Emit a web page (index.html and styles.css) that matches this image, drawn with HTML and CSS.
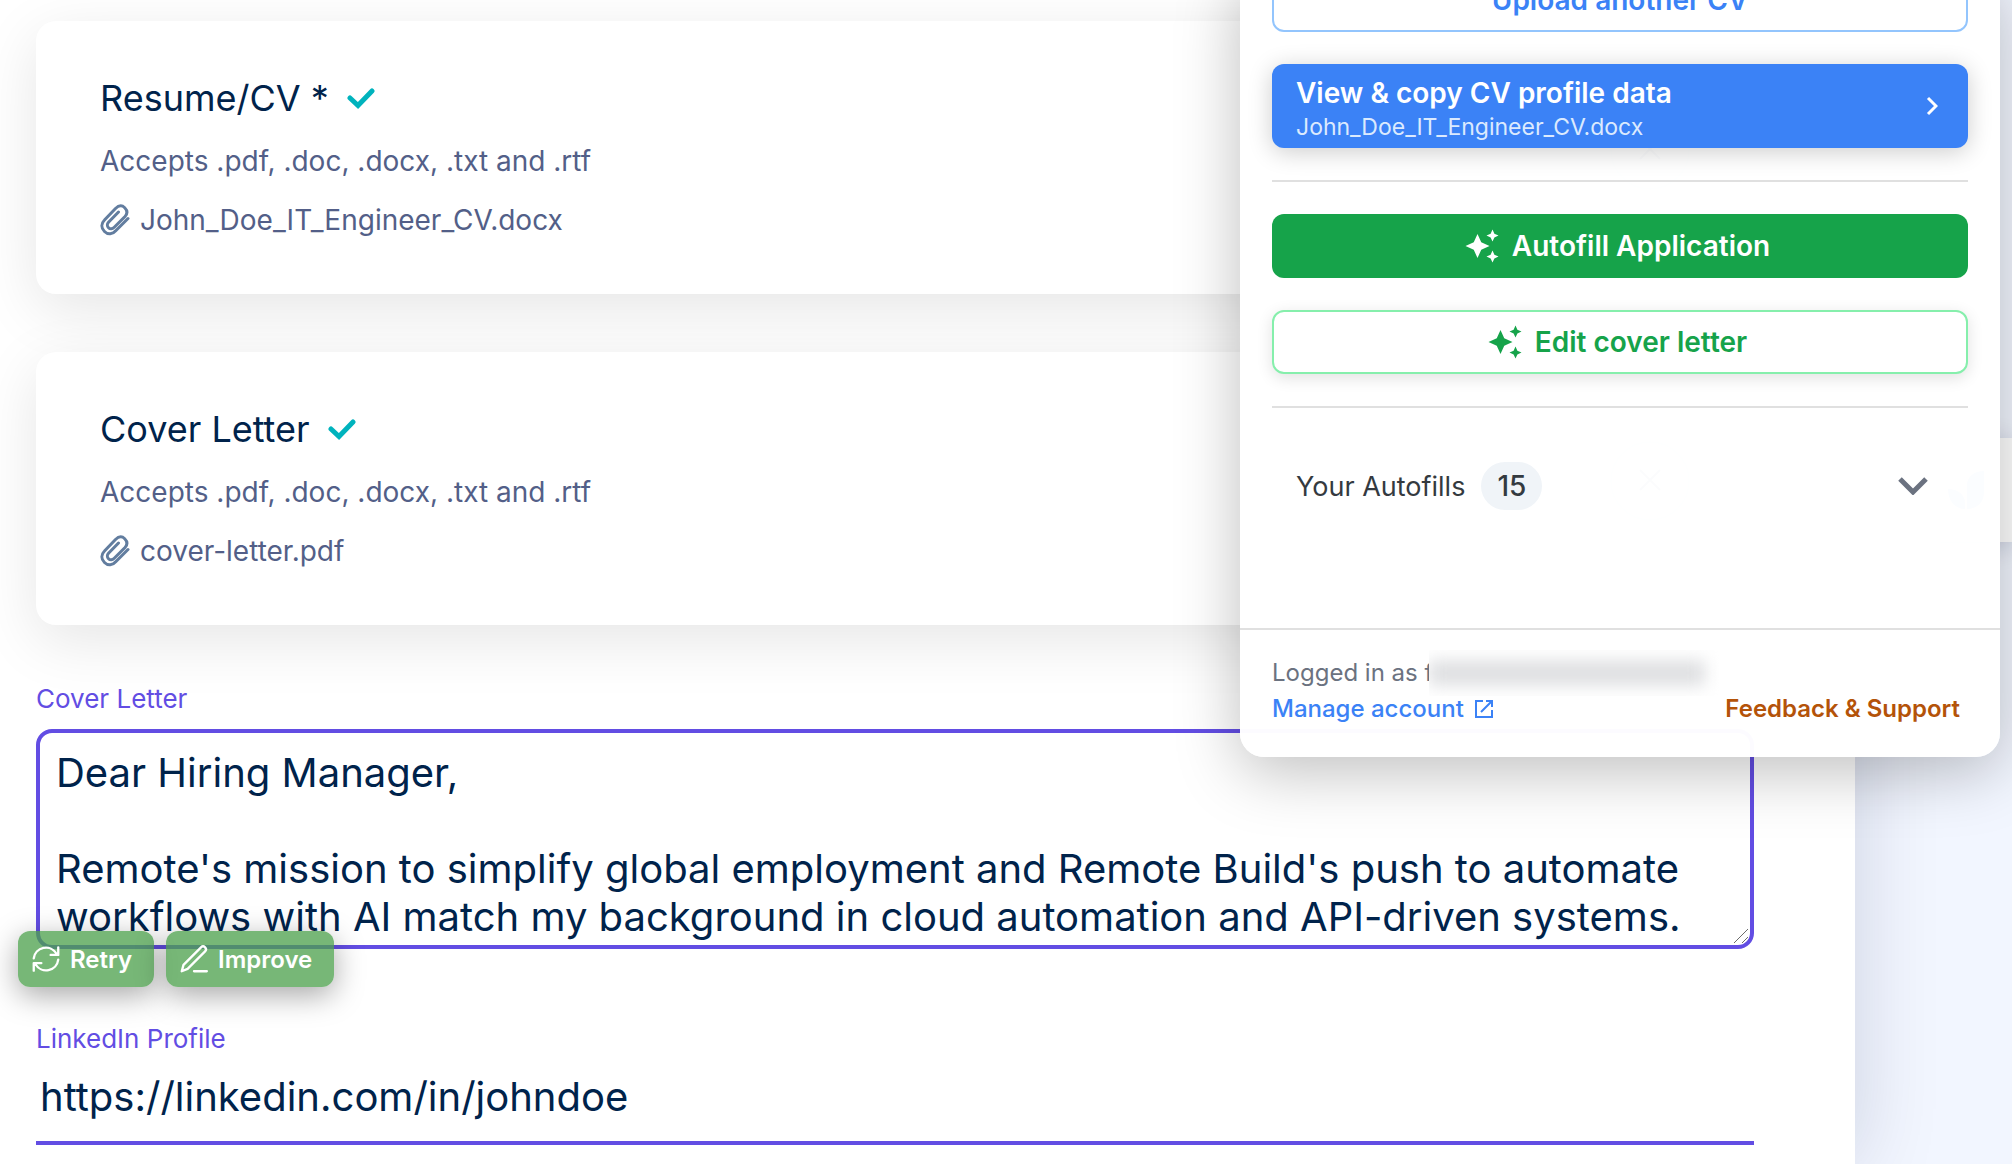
FILE: index.html
```html
<!DOCTYPE html>
<html lang="en">
<head>
    <meta charset="UTF-8">
    <meta name="viewport" content="width=device-width, initial-scale=1.0">
    <title>Job Application</title>
    <link rel="stylesheet" href="styles.css">
</head>
<body>
    <main class="page">
        <form class="application">
            <section class="card">
                <div>
                    <h2 class="card-title">Resume/CV *
                        <svg class="check" viewBox="0 0 28 24" aria-hidden="true"><path d="M3 12l8 7.500L25 5"/></svg>
                    </h2>
                    <p class="hint">Accepts .pdf, .doc, .docx, .txt and .rtf</p>
                    <p class="file">
                        <svg class="clip" viewBox="0 0 32 32" aria-hidden="true"><path d="M28 14.500L16 26.500C12.500 30.500 8 31 4.500 27.500C1 24 1 19.500 4.500 16L15.500 4.500C18.500 1.500 22 1 24.700 3.700C27.400 6.400 27.400 9.800 25 12.500L14 23.500C12.400 25.100 10 25.200 8.500 23.700C7 22.200 7 19.800 8.500 18.200L18.500 8"/></svg>
                        John_Doe_IT_Engineer_CV.docx
                    </p>
                </div>
                <button type="button" class="remove" aria-label="Remove Resume/CV">
                    <svg viewBox="0 0 24 24" aria-hidden="true"><path d="M2 2l20 20M22 2L2 22"/></svg>
                </button>
            </section>

            <section class="card">
                <div>
                    <h2 class="card-title">Cover Letter
                        <svg class="check" viewBox="0 0 28 24" aria-hidden="true"><path d="M3 12l8 7.500L25 5"/></svg>
                    </h2>
                    <p class="hint">Accepts .pdf, .doc, .docx, .txt and .rtf</p>
                    <p class="file">
                        <svg class="clip" viewBox="0 0 32 32" aria-hidden="true"><path d="M28 14.500L16 26.500C12.500 30.500 8 31 4.500 27.500C1 24 1 19.500 4.500 16L15.500 4.500C18.500 1.500 22 1 24.700 3.700C27.400 6.400 27.400 9.800 25 12.500L14 23.500C12.400 25.100 10 25.200 8.500 23.700C7 22.200 7 19.800 8.500 18.200L18.500 8"/></svg>
                        cover-letter.pdf
                    </p>
                </div>
                <button type="button" class="remove" aria-label="Remove Cover Letter">
                    <svg viewBox="0 0 24 24" aria-hidden="true"><path d="M2 2l20 20M22 2L2 22"/></svg>
                </button>
            </section>

            <div class="field letter-field">
                <label for="letter">Cover Letter</label>
                <textarea id="letter" name="letter">Dear Hiring Manager,

Remote's mission to simplify global employment and Remote Build's push to automate workflows with AI match my background in cloud automation and API-driven systems.</textarea>
                <svg class="grip" viewBox="0 0 16 16" aria-hidden="true"><path d="M1 15L15 1M9 15L15 9"/></svg>
                <div class="ai-actions">
                    <button type="button" class="ai-button">
                        <svg viewBox="0 0 24 24" aria-hidden="true"><path d="M22.500 2v6.500H16M1.500 22v-6.500H8M1.500 11.500A10.500 10.500 0 0 1 21 7.500M22.500 12.500A10.500 10.500 0 0 1 3 16.500"/></svg>
                        Retry
                    </button>
                    <button type="button" class="ai-button">
                        <svg viewBox="0 0 24 24" aria-hidden="true"><path d="M12 22.500h11M18 2a2.400 2.400 0 0 1 3.500 3.500L6.500 20.500l-5 2 1.500-5.500z"/></svg>
                        Improve
                    </button>
                </div>
            </div>

            <div class="field">
                <label for="linkedin">LinkedIn Profile</label>
                <input type="text" id="linkedin" name="linkedin" value="https://linkedin.com/in/johndoe">
            </div>
        </form>
    </main>

    <div class="side-tab">
        <svg viewBox="0 0 36 38" aria-hidden="true"><path d="M19 38V14C19 6 26 0 36 0v22c0 9-7 16-17 16zM17 38C7 38 0 30 0 18c10 0 17 6 17 14z"/></svg>
    </div>

    <aside class="popup">
        <div class="popup-body">
            <button type="button" class="btn btn-upload">Upload another CV</button>
            <button type="button" class="btn btn-profile">
                <span class="profile-text">
                    <span>View &amp; copy CV profile data</span>
                    <small>John_Doe_IT_Engineer_CV.docx</small>
                </span>
                <svg class="arrow" viewBox="0 0 12 20" aria-hidden="true"><path d="M2 2l8 8-8 8"/></svg>
            </button>
            <hr>
            <button type="button" class="btn btn-autofill">
                <svg class="sparkles" viewBox="0 0 24 24" aria-hidden="true"><path d="M19 9l1.250-2.750L23 5l-2.750-1.250L19 1l-1.250 2.750L15 5l2.750 1.250L19 9zm-7.500.500L9 4 6.500 9.500 1 12l5.500 2.500L9 20l2.500-5.500L17 12l-5.500-2.500zM19 15l-1.250 2.750L15 19l2.750 1.250L19 23l1.250-2.750L23 19l-2.750-1.250L19 15z"/></svg>
                Autofill Application
            </button>
            <button type="button" class="btn btn-edit">
                <svg class="sparkles" viewBox="0 0 24 24" aria-hidden="true"><path d="M19 9l1.250-2.750L23 5l-2.750-1.250L19 1l-1.250 2.750L15 5l2.750 1.250L19 9zm-7.500.500L9 4 6.500 9.500 1 12l5.500 2.500L9 20l2.500-5.500L17 12l-5.500-2.500zM19 15l-1.250 2.750L15 19l2.750 1.250L19 23l1.250-2.750L23 19l-2.750-1.250L19 15z"/></svg>
                Edit cover letter
            </button>
            <hr>
            <button type="button" class="autofills">
                Your Autofills <span class="count">15</span>
                <svg class="chevron" viewBox="0 0 30 18" aria-hidden="true"><path d="M2 2l13 13L28 2"/></svg>
            </button>
        </div>
        <footer class="popup-footer">
            <p class="account">Logged in as f<span class="redacted"></span></p>
            <div class="links">
                <a class="manage" href="#">Manage account
                    <svg viewBox="0 0 20 20" aria-hidden="true"><path d="M9 2H2v16h16v-7M12 2h6v6M18 2L7 13"/></svg>
                </a>
                <a class="support" href="#">Feedback &amp; Support</a>
            </div>
        </footer>
    </aside>
</body>
</html>
```

FILE: styles.css
```css
* {
    box-sizing: border-box;
}

body {
    margin: 0;
    min-height: 100vh;
    background-color: #f2f6ff;
    font-family: Inter, "Liberation Sans", sans-serif;
    color: #00234b;
    overflow: hidden;
}

h2, p {
    margin: 0;
    font-weight: 400;
}

button {
    font-family: inherit;
    cursor: pointer;
}

svg {
    fill: none;
    stroke: currentColor;
    flex-shrink: 0;
}

.page {
    min-height: 100vh;
    margin-right: 157px;
    padding: 21px 101px 20px 36px;
    background: white;
    box-shadow: 0 0 80px rgba(0, 20, 60, 0.16);
}

.application {
    display: flex;
    flex-direction: column;
}

.card {
    display: flex;
    justify-content: space-between;
    padding: 53px 64px 54px;
    margin-bottom: 58px;
    border-radius: 20px;
    background: white;
    box-shadow: 0 16px 60px rgba(0, 0, 0, 0.1);
}

.card-title {
    display: flex;
    align-items: center;
    gap: 18px;
    font-size: 36px;
    line-height: 48px;
}

.check {
    width: 28px;
    height: 24px;
    color: #00b3bd;
    stroke-width: 5;
    stroke-linecap: round;
}

.hint,
.file {
    margin-top: 19px;
    font-size: 28px;
    line-height: 40px;
    color: #535f88;
}

.file {
    display: flex;
    align-items: center;
    gap: 8px;
}

.clip {
    width: 32px;
    height: 32px;
    color: #627d9f;
    stroke-width: 3;
    stroke-linecap: round;
}

.remove {
    width: 80px;
    height: 80px;
    margin-top: 36px;
    border: 2px solid #d0d6e4;
    border-radius: 50%;
    background: white;
    color: #535f88;
}

.remove svg {
    width: 24px;
    height: 24px;
    stroke-width: 2;
}

.field {
    position: relative;
    display: flex;
    flex-direction: column;
}

.letter-field {
    margin-bottom: 74px;
}

label {
    font-size: 26px;
    line-height: 32px;
    color: #624de3;
}

textarea,
input {
    width: 100%;
    font-family: inherit;
    font-size: 40px;
    line-height: 48px;
    color: #00234b;
    background: white;
    outline: none;
}

textarea {
    height: 220px;
    margin-top: 14px;
    padding: 16px 16px 0;
    border: 4px solid #624de3;
    border-radius: 16px;
    overflow: hidden;
    resize: none;
}

.grip {
    position: absolute;
    right: 5px;
    bottom: 5px;
    width: 16px;
    height: 16px;
    color: #6b6b6b;
}

input {
    height: 90px;
    padding: 0 4px 4px;
    border: none;
    border-bottom: 4px solid #624de3;
}

.ai-actions {
    position: absolute;
    left: -18px;
    bottom: -38px;
    display: flex;
    gap: 12px;
}

.ai-button {
    display: flex;
    align-items: center;
    gap: 10px;
    height: 56px;
    padding: 0 22px 0 14px;
    border: none;
    border-radius: 12px;
    background: rgba(76, 160, 76, 0.76);
    color: white;
    font-size: 24px;
    font-weight: 600;
    box-shadow: 0 8px 30px rgba(0, 0, 0, 0.35);
}

.ai-button svg {
    width: 28px;
    height: 28px;
    stroke-width: 2;
    stroke-linecap: round;
    stroke-linejoin: round;
    overflow: visible;
}

.side-tab {
    position: absolute;
    top: 438px;
    right: 0;
    display: flex;
    align-items: center;
    justify-content: center;
    width: 92px;
    height: 104px;
    background: white;
    box-shadow: 0 4px 24px rgba(0, 20, 60, 0.2);
}

.side-tab svg {
    width: 36px;
    height: 38px;
    fill: #3b82f6;
    stroke: none;
}

/* Extension panel, open above the application form */
.popup {
    position: absolute;
    top: -32px;
    right: 12px;
    width: 760px;
    border-radius: 24px;
    background: rgba(255, 255, 255, 0.98);
    box-shadow: 0 14px 64px rgba(0, 0, 0, 0.26);
}

.popup-body {
    display: flex;
    flex-direction: column;
    gap: 32px;
    padding: 0 32px 94px;
}

.popup hr {
    width: 100%;
    height: 2px;
    margin: 0;
    border: none;
    background: #e0e0e0;
}

.btn {
    display: flex;
    align-items: center;
    justify-content: center;
    gap: 12px;
    height: 64px;
    border: 2px solid transparent;
    border-radius: 12px;
    font-size: 28px;
    font-weight: 600;
    line-height: 36px;
}

.btn-upload {
    border-color: #93c5fd;
    background: white;
    color: #3b82f6;
}

.btn-profile {
    justify-content: space-between;
    height: 84px;
    padding: 0 28px 0 22px;
    background: #3b82f6;
    color: white;
    text-align: left;
    box-shadow: 0 4px 24px rgba(0, 0, 0, 0.2);
}

.profile-text {
    display: flex;
    flex-direction: column;
    padding-top: 6px;
}

.profile-text small {
    font-size: 23px;
    font-weight: 400;
    line-height: 32px;
    color: #dbeafe;
}

.arrow {
    width: 12px;
    height: 20px;
    stroke-width: 3;
}

.btn-autofill,
.btn-edit {
    padding: 0 10px 0 4px;
}

.btn-autofill {
    background: #16a34a;
    color: white;
}

.btn-edit {
    border-color: #86efac;
    background: white;
    color: #16a34a;
    box-shadow: 0 4px 16px rgba(0, 0, 0, 0.12);
}

.sparkles {
    width: 36px;
    height: 36px;
    fill: currentColor;
    stroke: none;
}

.autofills {
    display: flex;
    align-items: center;
    gap: 16px;
    height: 92px;
    padding: 0 40px 0 24px;
    border: none;
    background: none;
    color: #343a40;
    font-size: 27px;
}

.count {
    padding: 0 16px;
    border-radius: 24px;
    background: #f0f4f8;
    font-size: 28px;
    font-weight: 500;
    line-height: 48px;
}

.chevron {
    width: 30px;
    height: 18px;
    margin-left: auto;
    color: #6b7280;
    stroke-width: 5;
}

.popup-footer {
    margin-top: 2px;
    padding: 25px 40px 30px 32px;
    border-top: 2px solid #e0e0e0;
    font-size: 24px;
    font-weight: 500;
    line-height: 36px;
}

.account {
    display: flex;
    color: #6b7280;
}

.redacted {
    width: 290px;
    height: 46px;
    margin: -5px 0 -5px -4px;
    background: white;
    overflow: hidden;
}

.redacted::before {
    content: "";
    display: block;
    width: 276px;
    height: 26px;
    margin: 10px 0;
    background: #dfe0e2;
    filter: blur(8px);
}

.links {
    display: flex;
    justify-content: space-between;
}

.links a {
    text-decoration: none;
}

.manage {
    display: flex;
    align-items: center;
    gap: 10px;
    color: #3b82f6;
}

.manage svg {
    width: 20px;
    height: 20px;
    stroke-width: 2;
}

.support {
    color: #b45309;
    font-weight: 600;
}
```
